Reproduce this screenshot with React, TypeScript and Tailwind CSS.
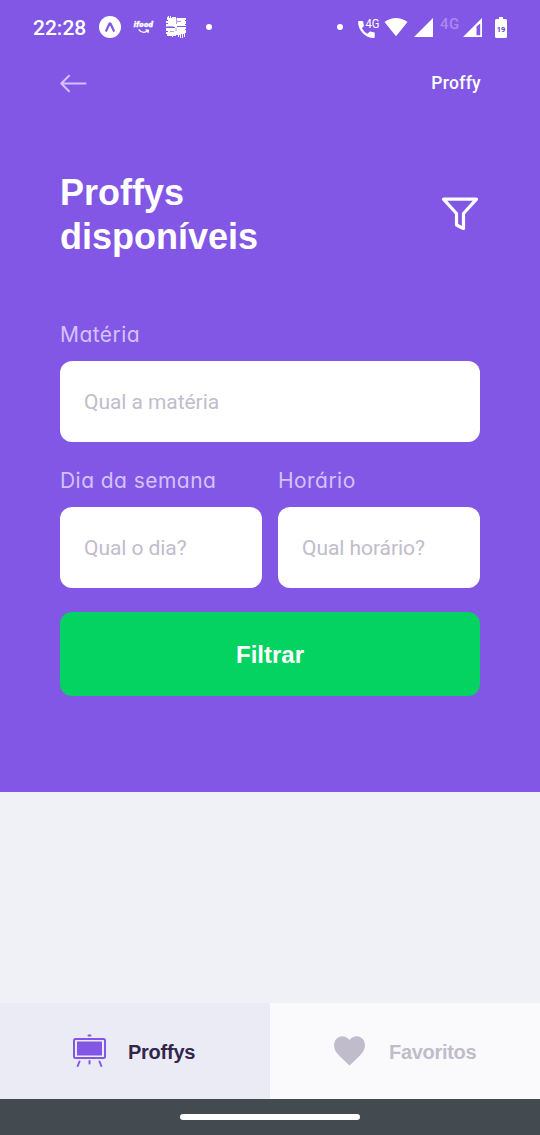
import React from "react";

function StatusBar() {
  return (
    <div className="flex h-[54px] items-center justify-between pl-[33px] pr-[33px] font-['Roboto',sans-serif] text-white">
      <div className="flex items-center">
        <span className="w-[66px] pt-px text-[21px] font-medium leading-6">22:28</span>
        <svg className="h-[22px] w-[22px]" viewBox="0 0 22 22">
          <circle cx="11" cy="11" r="11" fill="#fff" />
          <path d="M7.200 14.800 10.400 7.800Q11 6.800 11.600 7.800L14.800 14.800" fill="none" stroke="#8257e5" strokeWidth="2.200" strokeLinecap="round" strokeLinejoin="round" />
        </svg>
        <div className="ml-[12px] flex h-[18px] w-[21px] flex-col items-center">
          <span className="pt-[3px] text-[8px] font-black italic leading-[8px] tracking-[0.300px] [-webkit-text-stroke:0.400px_white]">ifood</span>
          <svg className="h-[6px] w-[12px]" viewBox="0 0 12 6">
            <path d="M1 .8Q5 5.500 10 1.800M8 1l2.400.3-.3 2" fill="none" stroke="#fff" strokeWidth="1.300" strokeLinecap="round" />
          </svg>
        </div>
        <svg className="ml-[11px] h-[22px] w-[22px]" viewBox="0 0 22 22">
          <path fill="#fff" d="M2 1h1V0h1v2h1V0h1v2h1V1h4v1h10v2h-1v1h1v3h-1v1h1v1h-9v1h9v2h-1v1h1v3h-1v4h-1v-3h-1v4h-1v-4h-1v4h-1v-3h-1v2h-1v-2h-2v1H8v1H7v-1H2v-2H1v-2h2v-1H1v-3h9v-1H1V8h2V7H1V5h2V4H2Z" />
          <path d="M1.500 10.500h7M11.500 2v6M12 5.500h4M5 15.500h4M11 12v3" stroke="#8257e5" strokeWidth=".6" />
        </svg>
        <span className="ml-[19px] h-[6px] w-[6px] rounded-full bg-white" />
      </div>
      <div className="flex items-center">
        <span className="mr-[15px] h-[6px] w-[6px] rounded-full bg-white" />
        <svg className="h-[24px] w-[24px]" viewBox="0 0 24 24">
          <path fill="#fff" d="M1 6h3.400q.7 0 .8.800.1 1.800.7 3.400.2.600-.2 1L3.900 13.200q2 3.800 5.600 5.600l2-2q.4-.4 1-.2 1.600.6 3.400.7.800.1.800.8V22q0 .9-.9.900C7.500 22.900.1 15.500.1 6.900.1 6.200.4 6 1 6Z" />
          <text x="7.500" y="13" fill="#fff" fontFamily="Roboto" fontSize="13" fontWeight="400" textLength="14" lengthAdjust="spacingAndGlyphs">4G</text>
        </svg>
        <svg className="ml-[2px] h-[20px] w-[24px]" viewBox="0 0 24 20">
          <path fill="#fff" d="M.5 5Q12-3.200 23.500 5L12 19.200Z" />
        </svg>
        <svg className="ml-[6px] h-[19px] w-[19px]" viewBox="0 0 19 19"><path fill="#fff" d="M19 0v19H0Z" /></svg>
        <span className="ml-[7px] w-[21px] -translate-y-[3px] text-[15px] font-medium leading-5 tracking-[0.500px] text-[#a989ee]">4G</span>
        <svg className="ml-[2px] h-[19px] w-[19px]" viewBox="0 0 19 19">
          <path fill="#fff" fillRule="evenodd" d="M19 0v19H0ZM17.200 5.500v11.700h-3.700V8.500Z" />
        </svg>
        <svg className="ml-[13px] h-[21px] w-[12px]" viewBox="0 0 12 21">
          <path fill="#fff" d="M4 0h4v2h2.500Q12 2 12 3.500v16q0 1.500-1.500 1.500h-9Q0 21 0 19.500v-16Q0 2 1.500 2H4Z" />
          <text x="6" y="14.500" textAnchor="middle" fill="#6640c2" fontFamily="Roboto" fontSize="7.500" fontWeight="700">19</text>
        </svg>
      </div>
    </div>
  );
}

function Field({ label, placeholder }: { label: string; placeholder: string }) {
  return (
    <label className="block flex-1">
      <span className="block h-[41px] pt-px font-['Inter',sans-serif] text-[21px] font-normal leading-[28px] tracking-[0.450px] text-[#d4c2ff] [font-feature-settings:'cv11']">
        {label}
      </span>
      <input
        className="block h-[81px] w-full rounded-[12px] bg-white px-[24px] font-['Roboto',sans-serif] text-[21px] tracking-[-0.060px] text-black outline-none placeholder:text-[#c1bccc]"
        placeholder={placeholder}
      />
    </label>
  );
}

export default function App() {
  return (
    <main className="flex h-[1135px] w-[540px] flex-col overflow-hidden bg-[#f0f0f7] font-['Liberation_Sans',sans-serif]">
      <section className="h-[792px] bg-[#8257e5]">
        <StatusBar />
        <div className="px-[60px]">
          <header className="flex h-[58px] items-center justify-between">
            <svg className="h-[20px] w-[28px]" viewBox="0 0 28 20" fill="none" stroke="#d4c2ff" strokeWidth="2" strokeLinecap="round" strokeLinejoin="round">
              <path d="M25.500 10.500H1.500M9 2.700 1.300 10.500 9 18.300" />
            </svg>
            <span className="-mr-px font-['Roboto',sans-serif] text-[17.500px] font-medium leading-5 tracking-[0.300px] text-white">Proffy</span>
          </header>
          <div className="mt-[58px] flex items-center justify-between">
            <h1 className="w-[240px] translate-y-px text-[36px] font-bold leading-[44px] text-white">Proffys disponíveis</h1>
            <svg className="mr-px h-[34px] w-[38px]" viewBox="0 0 38 34" fill="none" stroke="#fff" strokeWidth="3.200" strokeLinecap="round" strokeLinejoin="round">
              <path d="M2.500 2.200H35.500L22.500 16.500V31.500L15.500 28V16.500Z" />
            </svg>
          </div>
          <form className="mt-[62px]">
            <Field label="Matéria" placeholder="Qual a matéria" />
            <div className="mt-[24px] flex gap-[16px]">
              <Field label="Dia da semana" placeholder="Qual o dia?" />
              <Field label="Horário" placeholder="Qual horário?" />
            </div>
            <button type="button" className="mt-[24px] flex h-[84px] w-full items-center justify-center rounded-[12px] bg-[#04d361] pt-[2px] text-[24px] font-bold text-white">
              Filtrar
            </button>
          </form>
        </div>
      </section>
      <div className="flex-1" />
      <nav className="flex h-[96px] text-[20px] font-bold">
        <div className="flex w-[270px] shrink-0 items-center bg-[#ebebf5] pl-[72px] pt-[2px] tracking-[-0.250px] text-[#32264d]">
          <svg className="mr-[21px] h-[34px] w-[35px] -translate-y-px" viewBox="0 0 35 34">
            <rect x="2" y="5" width="31" height="19" rx="1.500" fill="none" stroke="#8257e5" strokeWidth="2" />
            <path fill="#8257e5" d="M5 7.500h25v14H5Z" />
            <path d="M16.500 1.500h2M17.500 27v2.500M7.500 27.500l-1.800 4.500M27.500 27.500l1.800 4.500" stroke="#8257e5" strokeWidth="2" strokeLinecap="round" />
          </svg>
          Proffys
        </div>
        <div className="flex w-[270px] shrink-0 items-center bg-[#fafafc] pl-[64px] pt-[2px] tracking-[-0.300px] text-[#c1bccc]">
          <svg className="mr-[24px] h-[30px] w-[31px] -translate-y-px" viewBox="0 0 31 30" fill="#c1bccc">
            <path d="M15.500 29.500C11 25 5.500 20.500 2.300 16.200-1 11.500-.5 5.500 2.800 2.500 6.500-.8 12-.5 15.500 4 19-.5 24.500-.8 28.200 2.500 31.500 5.500 32 11.500 28.700 16.200 25.500 20.500 20 25 15.500 29.500Z" />
          </svg>
          Favoritos
        </div>
      </nav>
      <div className="flex h-[36px] items-center justify-center bg-[#434b50]">
        <span className="h-[6px] w-[180px] rounded-full bg-white" />
      </div>
    </main>
  );
}
